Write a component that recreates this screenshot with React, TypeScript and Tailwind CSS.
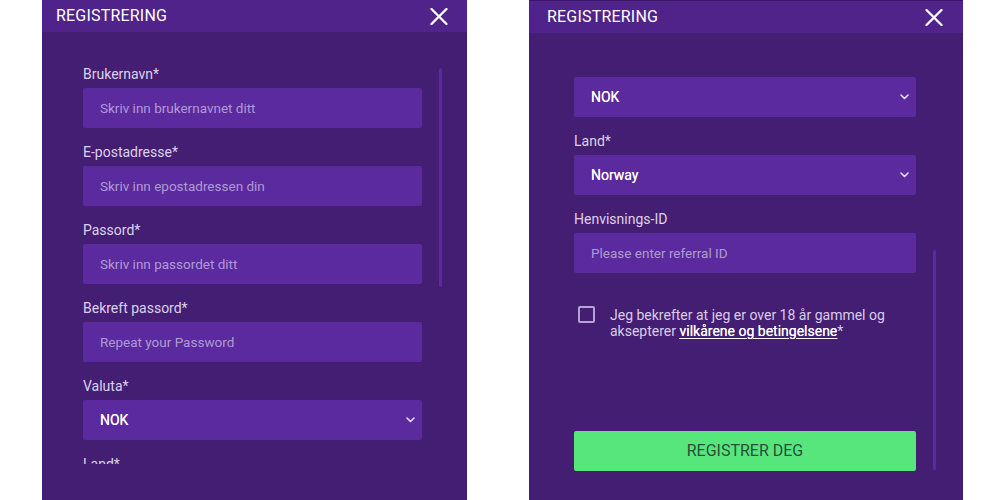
const font = { fontFamily: "Roboto, 'Liberation Sans', sans-serif" };

const Chevron = () => (
  <svg width="9" height="6" viewBox="0 0 9 6" fill="none" className="shrink-0">
    <path d="M1 1l3.5 3.5L8 1" stroke="#e6defa" strokeWidth="1.6" strokeLinecap="round" strokeLinejoin="round" />
  </svg>
);

const CloseIcon = () => (
  <svg width="18" height="17" viewBox="0 0 18 17" fill="none">
    <path d="M1.5 1l15 15M16.5 1l-15 15" stroke="#fff" strokeWidth="2.3" strokeLinecap="round" />
  </svg>
);

const Label = ({ children, first }: { children: string; first?: boolean }) => (
  <div className={`h-5 leading-5 text-[14px] text-[#dcd2ec] mb-1 ${first ? "" : "mt-[14px]"}`}>{children}</div>
);

const Input = ({ placeholder }: { placeholder: string }) => (
  <div className="h-10 rounded-[2px] bg-[#5a2a9e] flex items-center pl-[17px] text-[13.5px] text-[#b09ad4]">
    {placeholder}
  </div>
);

const Select = ({ value }: { value: string }) => (
  <div className="h-10 rounded-[2px] bg-[#5a2a9e] flex items-center justify-between pl-[17px] pr-[7px] text-[14px] text-white [text-shadow:0_0_0.4px_#fff]">
    <span>{value}</span>
    <Chevron />
  </div>
);

const Header = ({ tall }: { tall?: boolean }) => (
  <div
    className={`bg-[#4f238a] flex items-center justify-between ${
      tall ? "h-[33px] pl-[18px] pr-[20px] border-t border-[#3a1766]" : "h-[32px] pl-[14px] pr-[19px]"
    }`}
  >
    <span className="text-[16px] text-white tracking-[0.2px]">REGISTRERING</span>
    <CloseIcon />
  </div>
);

export default function App() {
  return (
    <div className="w-[1000px] h-[500px] bg-white flex pl-[42px] gap-[62px] overflow-hidden" style={font}>
      {/* left: top of the form */}
      <div className="w-[425px] h-[500px] bg-[#441e72] flex flex-col">
        <Header />
        <div className="h-[432px] overflow-hidden flex pl-[41px] gap-[17px]">
          <div className="w-[339px] pt-[32px] shrink-0">
            <Label first>Brukernavn*</Label>
            <Input placeholder="Skriv inn brukernavnet ditt" />
            <Label>E-postadresse*</Label>
            <Input placeholder="Skriv inn epostadressen din" />
            <Label>Passord*</Label>
            <Input placeholder="Skriv inn passordet ditt" />
            <Label>Bekreft passord*</Label>
            <Input placeholder="Repeat your Password" />
            <Label>Valuta*</Label>
            <Select value="NOK" />
            <Label>Land*</Label>
          </div>
          <div className="w-[3px] h-[219px] mt-[36px] rounded-full bg-[#5a2a9e] shrink-0" />
        </div>
      </div>

      {/* right: scrolled to the bottom */}
      <div className="w-[434px] h-[500px] bg-[#441e72] flex flex-col">
        <Header tall />
        <div className="h-[440px] overflow-hidden flex pl-[45px] gap-[17px]">
          <div className="w-[342px] pt-[44px] shrink-0">
            <Select value="NOK" />
            <Label>Land*</Label>
            <Select value="Norway" />
            <Label>Henvisnings-ID</Label>
            <Input placeholder="Please enter referral ID" />
            <div className="flex items-start mt-[32px] pl-[4px] gap-[15px]">
              <div className="w-[17px] h-[17px] border-2 border-[#b7a3d8] rounded-[2px] shrink-0 mt-[1px]" />
              <p className="text-[14px] leading-4 text-[#d8cdea] pt-[2px]">
                Jeg bekrefter at jeg er over 18 år gammel og
                <br />
                aksepterer{" "}
                <a href="#" className="text-white underline underline-offset-2 [text-shadow:0_0_0.5px_#fff]">
                  vilkårene og betingelsene
                </a>
                *
              </p>
            </div>
            <button className="mt-[92px] w-full h-10 rounded-[2px] bg-[#56e67b] text-[16px] text-[#2c4d3c]">
              REGISTRER DEG
            </button>
          </div>
          <div className="w-[3px] h-[220px] mt-[217px] rounded-full bg-[#5a2a9e] shrink-0" />
        </div>
      </div>
    </div>
  );
}
